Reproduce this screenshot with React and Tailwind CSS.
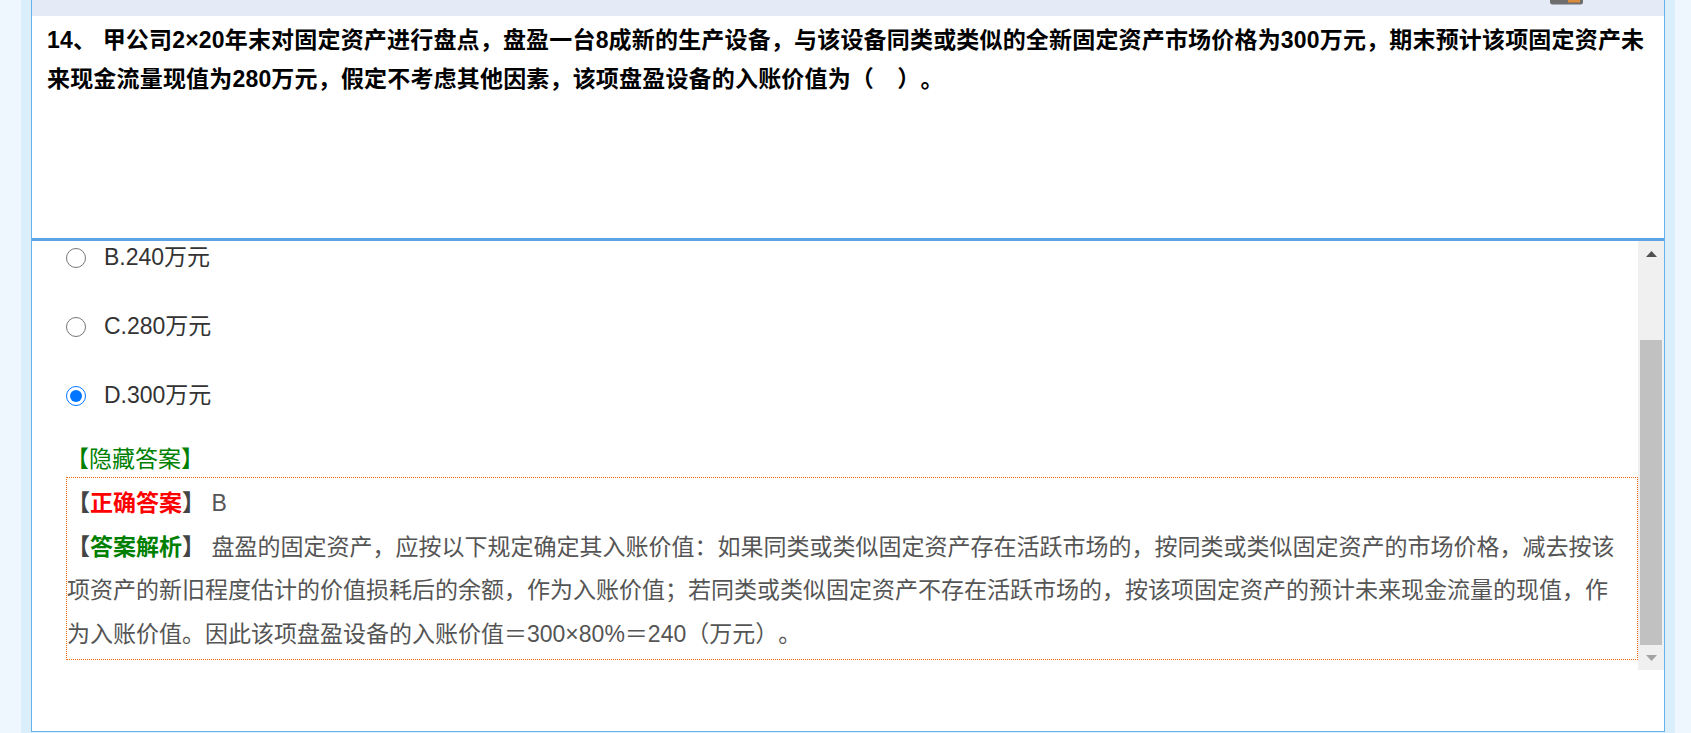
import React, { useLayoutEffect, useRef } from 'react';

const options = [
  { key: 'B', label: 'B.240万元', checked: false },
  { key: 'C', label: 'C.280万元', checked: false },
  { key: 'D', label: 'D.300万元', checked: true },
];

const ArrowUp = () => (
  <svg width="11" height="6" viewBox="0 0 11 6">
    <polygon points="5.5,0 11,6 0,6" fill="#505050" />
  </svg>
);

const ArrowDown = () => (
  <svg width="11" height="6" viewBox="0 0 11 6">
    <polygon points="0,0 11,0 5.5,6" fill="#a3a3a3" />
  </svg>
);

const App = () => {
  const scrollRef = useRef(null);

  // the answer area is scrolled down to its end
  useLayoutEffect(() => {
    const el = scrollRef.current;
    if (el) el.scrollTop = el.scrollHeight;
  }, []);

  return (
    <div className="flex h-[733px] w-full bg-[#eef6fe] pl-[21px] pr-[16px] font-['Liberation_Sans','Noto_Sans_CJK_SC',sans-serif] [text-spacing-trim:space-all]">
      <div className="flex-1 bg-[#daeefc] px-[10px] pb-[1px]">
        <div className="flex h-full flex-col border-x border-b border-[#68b2ea] bg-white">
          {/* top bar */}
          <div className="flex h-[16px] items-start justify-end bg-[#e4ebf6] pr-[81px]">
            <svg width="33" height="5" viewBox="0 0 33 5">
              <path d="M0 0 H33 V2 Q33 4.5 30.5 4.5 H2.5 Q0 4.5 0 2 Z" fill="#6e6e6e" />
              <rect x="18" y="0" width="12" height="2.5" fill="#d98a3a" />
            </svg>
          </div>

          {/* question */}
          <div className="h-[222px] pl-[15px] pr-[10px] pt-[5px] text-[23px] font-bold leading-[39px] tracking-[0.18px] text-black">
            14、 甲公司2×20年末对固定资产进行盘点，盘盈一台8成新的生产设备，与该设备同类或类似的全新固定资产市场价格为300万元，期末预计该项固定资产未来现金流量现值为280万元，假定不考虑其他因素，该项盘盈设备的入账价值为（　）。
          </div>

          <div className="h-[3px] bg-[#5ba4e5]" />

          {/* answer area */}
          <div className="flex h-[429px]">
            <div ref={scrollRef} className="flex-1 overflow-hidden">
              <div className="pt-[40px] pb-[10px] text-[23px]">
                {options.map((opt) => (
                  <label key={opt.key} className="flex h-[69px] items-center pl-[34px] text-[#333]">
                    <input
                      type="radio"
                      name="q14"
                      defaultChecked={opt.checked}
                      className="m-0 h-[20px] w-[20px] accent-[#0075ff]"
                    />
                    <span className="ml-[18px]">{opt.label}</span>
                  </label>
                ))}

                <div className="ml-[34px] mt-[11px] leading-[36px] text-[#008000]">【隐藏答案】</div>

                <div className="ml-[34px] border border-dotted border-[#f56a0a] pt-[4px] pb-[3px] pr-[14px] leading-[43.5px] text-[#555]">
                  <div>
                    <span className="font-bold text-[#444]">【</span>
                    <span className="font-bold text-[#ff0000]">正确答案</span>
                    <span className="font-bold text-[#444]">】</span> B
                  </div>
                  <div>
                    <span className="font-bold text-[#444]">【</span>
                    <span className="font-bold text-[#008000]">答案解析</span>
                    <span className="font-bold text-[#444]">】</span> 盘盈的固定资产，应按以下规定确定其入账价值：如果同类或类似固定资产存在活跃市场的，按同类或类似固定资产的市场价格，减去按该项资产的新旧程度估计的价值损耗后的余额，作为入账价值；若同类或类似固定资产不存在活跃市场的，按该项固定资产的预计未来现金流量的现值，作为入账价值。因此该项盘盈设备的入账价值＝300×80%＝240（万元）。
                  </div>
                </div>
              </div>
            </div>

            {/* scrollbar */}
            <div className="flex w-[26px] flex-col bg-[#f0f0f0]">
              <div className="flex h-[26px] items-center justify-center">
                <ArrowUp />
              </div>
              <div className="h-[73px]" />
              <div className="mx-[2px] h-[305px] bg-[#c1c1c1]" />
              <div className="flex flex-1 items-center justify-center">
                <ArrowDown />
              </div>
            </div>
          </div>
        </div>
      </div>
    </div>
  );
};

export default App;
